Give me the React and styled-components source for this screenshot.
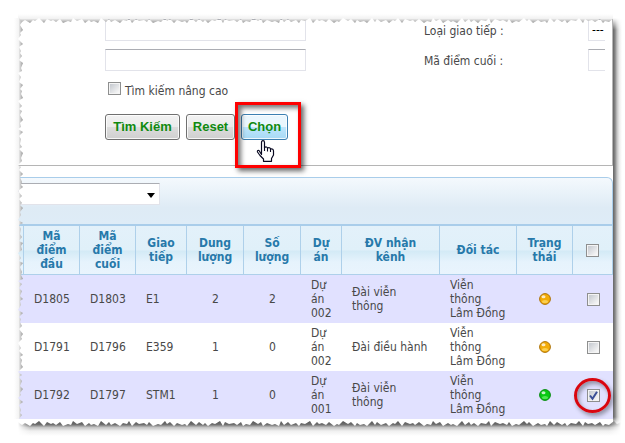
import React, { useState } from "react";
import styled, { createGlobalStyle } from "styled-components";

const GlobalStyle = createGlobalStyle`
  * { box-sizing: border-box; }
  body {
    margin: 0;
    background: #fff;
    color: #484848;
    font: 12px/14px "DejaVu Sans Condensed", "Noto Sans", sans-serif;
  }
`;

const Sheet = styled.main`
  position: relative;
  margin: 18px 12px 24px 18px;
  background: #fff;
`;

const SearchPanel = styled.form`
  padding: 1px 0 25px 87px;
  border: solid #b5b5b5;
  border-width: 0 1px 1px 0;
`;

const FieldRow = styled.div`
  display: grid;
  grid-template-columns: 201px minmax(0, 1fr) 17px;
  align-items: center;
  padding-right: 7px;
  margin-bottom: 8px;
`;

const TextInput = styled.input`
  width: 100%;
  height: 22px;
  padding: 2px 4px;
  border: 1px solid #e2e3ea;
  border-top-color: #abadb3;
  background: #fff;
  font: inherit;
`;

const FieldLabel = styled.label`
  padding: 2px 0 0 118px;
`;

const Clip = styled.div`
  overflow: hidden;
  height: 22px;
`;

const Dropdown = styled.select`
  appearance: none;
  width: ${(p) => p.$width};
  height: 22px;
  padding: 0 3px;
  border: 1px solid #e2e3ea;
  border-top-color: #abadb3;
  border-radius: 0;
  background: #fff;
  color: #000;
  font: inherit;
`;

const AdvancedRow = styled.div`
  display: flex;
  align-items: center;
  gap: 4px;
  height: 17px;
  margin: 11px 0 0 3px;
`;

const Tick = styled.input`
  appearance: none;
  display: block;
  width: 13px;
  height: 13px;
  margin: ${(p) => (p.$cell ? "0 auto" : "0 0 4px")};
  border: 1px solid #8e8f8f;
  outline: 1px solid #f4f4f4;
  outline-offset: -2px;
  background: linear-gradient(135deg, #c8ccd2 15%, #f6f6f6 85%);
`;

const TickCell = styled.div`
  position: relative;
  width: 13px;
  margin: 0 auto;
`;

const CheckMark = styled.svg`
  position: absolute;
  inset: 0;
  pointer-events: none;
`;

const HighlightRing = styled.span`
  position: absolute;
  inset: -11px -11px -11px -13px;
  border: 3px solid #d9060f;
  border-radius: 50%;
  box-shadow: 2px 3px 4px rgba(0, 0, 0, 0.35), inset 2px 3px 4px rgba(0, 0, 0, 0.35);
  pointer-events: none;
  z-index: 3;
`;

const Actions = styled.div`
  display: flex;
  gap: 6px;
  margin-top: 15px;
`;

const Button = styled.button`
  height: 26px;
  width: ${(p) => p.$width};
  padding: 0;
  border: 1px solid ${(p) => (p.$active ? "#3c7fb1" : "#707070")};
  border-radius: 3px;
  box-shadow: inset 0 0 0 1px rgba(255, 255, 255, 0.8);
  background: ${(p) =>
    p.$active
      ? "linear-gradient(#eaf6fd 0 50%, #bee6fd 50%, #a7d9f5)"
      : "linear-gradient(#f2f2f2, #ebebeb 50%, #dddddd 50%, #cfcfcf)"};
  color: #108a10;
  font: bold 13px/16px "Liberation Sans", Arial, sans-serif;
  white-space: nowrap;
`;

const Target = styled.div`
  position: relative;
`;

const HighlightBox = styled.span`
  position: absolute;
  inset: -12px -13px -28px -6px;
  border: 3px solid #fe0000;
  box-shadow: 3px 3px 5px rgba(0, 0, 0, 0.6), inset 3px 3px 5px rgba(0, 0, 0, 0.55);
  pointer-events: none;
`;

const Pointer = styled.svg`
  position: absolute;
  left: 15px;
  top: 26px;
  pointer-events: none;
`;

const Toolbar = styled.div`
  margin-top: 11px;
  padding: 5px 0 19px;
  border: solid #a9cdea;
  border-width: 1px 1px 2px 0;
  border-top-right-radius: 6px;
  background: linear-gradient(#f4f9fd, #deebf5 65%, #deecf7);
`;

const PickerWrap = styled.div`
  position: relative;
  width: 142px;
  height: 22px;
`;

const Caret = styled.svg`
  position: absolute;
  right: 5px;
  top: 10px;
  pointer-events: none;
`;

const Table = styled.table`
  width: 100%;
  table-layout: fixed;
  border-collapse: separate;
  border-spacing: 0;
`;

const Col = styled.col`
  width: ${(p) => p.$width}px;
`;

const Head = styled.th`
  height: 49px;
  padding: 3px 2px;
  border: solid #aed0ea;
  border-width: 0 1px 1px 0;
  background: linear-gradient(#e3f1fa 0, #e0f0f9 50%, #d3eaf6 52%, #e6f3fc 75%, #e9f4fd);
  color: #2779aa;
  font-weight: bold;
`;

const Row = styled.tr`
  background: ${(p) => (p.$shaded ? "#e1e1ff" : "#fff")};
`;

const Cell = styled.td`
  height: 48px;
  padding: 3px 0 3px ${(p) => (p.$center ? 0 : 10)}px;
  text-align: ${(p) => (p.$center ? "center" : "left")};
  vertical-align: middle;
`;

const Lines = styled.span`
  display: block;
  white-space: pre;
`;

const Orb = styled.svg`
  display: block;
  margin: 0 auto;
`;

const EdgeTop = styled.svg`
  position: absolute;
  left: 0;
  top: -4px;
  width: 100%;
  height: 9px;
  pointer-events: none;
`;

const EdgeLeft = styled.svg`
  position: absolute;
  left: -4px;
  top: 0;
  width: 9px;
  height: 100%;
  pointer-events: none;
`;

const EdgeBottom = styled.svg`
  position: absolute;
  left: 0;
  top: 100%;
  width: calc(100% + 8px);
  height: 20px;
  pointer-events: none;
  mask-image: linear-gradient(90deg, transparent, #000 12px, #000 calc(100% - 12px), transparent);
`;

const EdgeRight = styled.div`
  position: absolute;
  left: 100%;
  top: 0;
  bottom: -6px;
  width: 9px;
  background: linear-gradient(90deg, #666 0, #868686 22%, #c4c4c4 45%, #ececec 70%, #fff);
  mask-image: linear-gradient(transparent, #000 12px, #000 calc(100% - 8px), transparent);
`;

const DEPTHS = [1, 4, 2, 5, 2, 3, 0, 5, 1, 3, 2, 4, 1, 5, 3, 4, 0, 3, 1, 5, 2, 4, 3, 5, 0, 4];
const STEPS = [4, 3, 5, 3, 2, 4, 5, 3, 4, 2, 3];

function tearPoints(length, base, vertical) {
  const points = [];
  let at = 0;
  for (let i = 0; at < length; i += 1) {
    const depth = base + DEPTHS[i % DEPTHS.length];
    points.push(vertical ? `${depth},${at}` : `${at},${depth}`);
    at += STEPS[i % STEPS.length];
  }
  return points.join(" ");
}

function TornEdges() {
  return (
    <>
      <EdgeTop aria-hidden="true">
        <defs>
          <linearGradient id="tearTop" gradientUnits="userSpaceOnUse" x1="0" y1="0" x2="0" y2="9">
            <stop offset="0" stopColor="#fff" />
            <stop offset="0.5" stopColor="#f2f2f2" />
            <stop offset="1" stopColor="#9a9a9a" />
          </linearGradient>
        </defs>
        <polygon points={`0,0 ${tearPoints(3000, 4, false)} 3000,0`} fill="url(#tearTop)" />
      </EdgeTop>
      <EdgeLeft aria-hidden="true">
        <defs>
          <linearGradient id="tearLeft" gradientUnits="userSpaceOnUse" x1="0" y1="0" x2="9" y2="0">
            <stop offset="0" stopColor="#fff" />
            <stop offset="0.5" stopColor="#f4f4f4" />
            <stop offset="1" stopColor="#999" />
          </linearGradient>
        </defs>
        <polygon points={`0,0 ${tearPoints(3000, 4, true)} 0,3000`} fill="url(#tearLeft)" />
      </EdgeLeft>
      <EdgeBottom aria-hidden="true">
        <defs>
          <linearGradient id="tearBottom" x1="0" y1="0" x2="0" y2="1">
            <stop offset="0" stopColor="#484848" />
            <stop offset="0.28" stopColor="#707070" />
            <stop offset="0.42" stopColor="#c4c4c4" />
            <stop offset="0.6" stopColor="#f0f0f0" />
            <stop offset="0.85" stopColor="#fff" />
          </linearGradient>
        </defs>
        <rect width="100%" height="20" fill="url(#tearBottom)" />
        <polygon points={`0,0 ${tearPoints(3000, 2, false)} 3000,0`} fill="#fff" />
      </EdgeBottom>
      <EdgeRight />
    </>
  );
}

const COLUMNS = [
  [6, ""],
  [56, "Mã\nđiểm\nđầu"],
  [56, "Mã\nđiểm\ncuối"],
  [51, "Giao\ntiếp"],
  [57, "Dung\nlượng"],
  [57, "Số\nlượng"],
  [41, "Dự\nán"],
  [98, "ĐV nhận\nkênh"],
  [77, "Đối tác"],
  [56, "Trạng\nthái"],
];

const ROWS = [
  { id: 1, first: "D1805", last: "D1803", link: "E1", size: 2, count: 2, project: "Dự\nán\n002", unit: "Đài viễn\nthông", status: "amber" },
  { id: 2, first: "D1791", last: "D1796", link: "E359", size: 1, count: 0, project: "Dự\nán\n002", unit: "Đài điều hành", status: "amber" },
  { id: 3, first: "D1792", last: "D1797", link: "STM1", size: 1, count: 0, project: "Dự\nán\n001", unit: "Đài viễn\nthông", status: "green" },
];

function StatusOrb({ status }) {
  const [edge, fill, glow] =
    status === "green" ? ["#078a10", "#08c912", "#7dff7d"] : ["#ad7208", "#f3ac08", "#ffe680"];
  return (
    <Orb width="12" height="12" viewBox="0 0 12 12" role="img" aria-label={status}>
      <circle cx="6" cy="6" r="5.4" fill={fill} stroke={edge} />
      <ellipse cx="6" cy="8.5" rx="3" ry="1.6" fill={glow} opacity="0.6" />
      <ellipse cx="4.5" cy="3.8" rx="2" ry="1.5" fill="#fff" opacity="0.75" />
    </Orb>
  );
}

export default function App() {
  const [selected, setSelected] = useState([3]);
  const toggle = (id) =>
    setSelected((s) => (s.includes(id) ? s.filter((x) => x !== id) : [...s, id]));
  const allSelected = selected.length === ROWS.length;

  return (
    <>
      <GlobalStyle />
      <Sheet>
        <SearchPanel onSubmit={(e) => e.preventDefault()}>
          <FieldRow>
            <TextInput aria-label="Giao tiếp" />
            <FieldLabel htmlFor="linkType">Loại giao tiếp :</FieldLabel>
            <Clip>
              <Dropdown id="linkType" $width="120px">
                <option>---</option>
              </Dropdown>
            </Clip>
          </FieldRow>
          <FieldRow>
            <TextInput aria-label="Mã điểm đầu" />
            <FieldLabel htmlFor="lastPoint">Mã điểm cuối :</FieldLabel>
            <Clip>
              <Dropdown id="lastPoint" $width="120px" />
            </Clip>
          </FieldRow>
          <AdvancedRow>
            <Tick type="checkbox" id="advanced" />
            <label htmlFor="advanced">Tìm kiếm nâng cao</label>
          </AdvancedRow>
          <Actions>
            <Button type="submit" $width="75px">Tìm Kiếm</Button>
            <Button type="reset" $width="49px">Reset</Button>
            <Target>
              <Button type="button" $width="47px" $active>Chọn</Button>
              <HighlightBox />
              <Pointer width="19" height="22" viewBox="0 0 19 22" aria-hidden="true">
                <path
                  d="M5.5 14.5V2.5Q5.5 .7 7 .7T8.5 2.5V7.5Q10.8 6.2 11.5 8Q14 7 14.5 9Q17.5 8.4 17.5 11V15L15.5 18.5V21.3H7.5V19L4 15.5L1.5 12Q1 10 3 10.5Z"
                  fill="#fff" stroke="#080820" strokeWidth="1.2" strokeLinejoin="round"
                />
                <path d="M8.5 7V11M11.5 8V11.5M14.5 9V12" fill="none" stroke="#080820" strokeWidth="1.1" />
              </Pointer>
            </Target>
          </Actions>
        </SearchPanel>

        <Toolbar>
          <PickerWrap>
            <Dropdown aria-label="Danh sách" $width="100%" />
            <Caret width="8" height="5" viewBox="0 0 8 5" aria-hidden="true">
              <path d="M0 0H8L4 5Z" fill="#000" />
            </Caret>
          </PickerWrap>
        </Toolbar>

        <Table>
          <colgroup>
            {COLUMNS.map(([width], i) => <Col key={i} $width={width} />)}
            <Col $width={40} />
          </colgroup>
          <thead>
            <tr>
              {COLUMNS.map(([, title], i) => (
                <Head key={i} scope="col"><Lines>{title}</Lines></Head>
              ))}
              <Head scope="col">
                <Tick
                  $cell
                  type="checkbox"
                  aria-label="Chọn tất cả"
                  checked={allSelected}
                  onChange={() => setSelected(allSelected ? [] : ROWS.map((r) => r.id))}
                />
              </Head>
            </tr>
          </thead>
          <tbody>
            {ROWS.map((r, i) => (
              <Row key={r.id} $shaded={i % 2 === 0}>
                <Cell />
                <Cell>{r.first}</Cell>
                <Cell>{r.last}</Cell>
                <Cell>{r.link}</Cell>
                <Cell $center>{r.size}</Cell>
                <Cell $center>{r.count}</Cell>
                <Cell><Lines>{r.project}</Lines></Cell>
                <Cell><Lines>{r.unit}</Lines></Cell>
                <Cell><Lines>{"Viễn\nthông\nLâm Đồng"}</Lines></Cell>
                <Cell $center><StatusOrb status={r.status} /></Cell>
                <Cell $center>
                  <TickCell>
                    <Tick
                      $cell
                      type="checkbox"
                      aria-label={`Chọn ${r.first}`}
                      checked={selected.includes(r.id)}
                      onChange={() => toggle(r.id)}
                    />
                    {selected.includes(r.id) && (
                      <CheckMark width="13" height="13" viewBox="0 0 13 13" aria-hidden="true">
                        <path d="M3 6.5L5.5 9.8L10 2.8" fill="none" stroke="#3b4f96" strokeWidth="2" />
                      </CheckMark>
                    )}
                    {r.id === 3 && <HighlightRing />}
                  </TickCell>
                </Cell>
              </Row>
            ))}
          </tbody>
        </Table>
        <TornEdges />
      </Sheet>
    </>
  );
}
